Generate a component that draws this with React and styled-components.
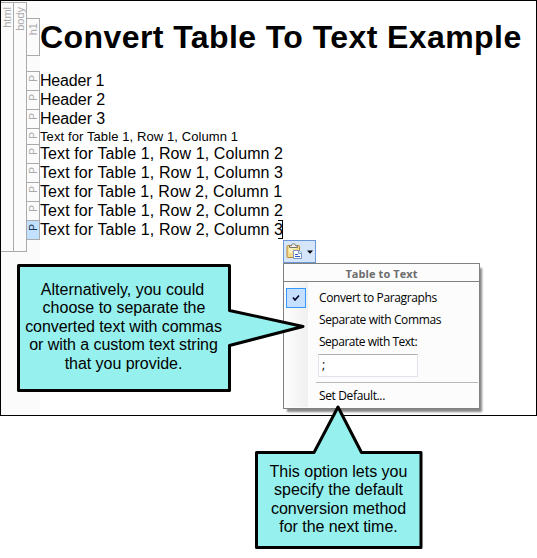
import React from "react";
import styled, { createGlobalStyle } from "styled-components";

const GlobalStyle = createGlobalStyle`
  * { box-sizing: border-box; }
  body { margin: 0; background: #fff; overflow: hidden; }
`;

const Stage = styled.main`
  position: relative;
  width: 537px;
  height: 558px;
  font-family: "Liberation Sans", Arial, sans-serif;
  color: #000;
`;

const Editor = styled.section`
  display: flex;
  width: 537px;
  height: 416px;
  border: 1px solid #000;
  background: linear-gradient(to right, #fbfbfb 39px, #fff 39px);
`;

const TagColumn = styled.div`
  width: 13px;
  height: 250px;
  margin-top: 1px;
  border: solid #aaa;
  border-width: 1px 1px 1px 0;
  display: flex;
  justify-content: center;
  padding-top: 4px;
`;

const TagName = styled.span`
  writing-mode: vertical-rl;
  transform: rotate(180deg);
  font-size: ${(p) => p.$size || 11}px;
  line-height: 11px;
  height: max-content;
  color: ${(p) => (p.$active ? "#1c3550" : "#aaa")};
`;

const Document = styled.div`
  display: flex;
  flex-direction: column;
  padding-top: 17px;
`;

const Block = styled.div`
  display: flex;
  height: ${(p) => p.$height}px;
  margin-bottom: ${(p) => p.$gap || 0}px;
`;

const BlockTag = styled.div`
  width: 14px;
  height: ${(p) => p.$height + 1}px;
  margin-left: -1px;
  border: 1px solid #aaa;
  background: ${(p) => (p.$active ? "#c2e0ff" : "#fbfbfb")};
  display: flex;
  justify-content: center;
  padding-top: ${(p) => p.$pad}px;
`;

const Heading = styled.h1`
  margin: 0;
  font-size: 32px;
  line-height: 38px;
  letter-spacing: 0.42px;
  white-space: nowrap;
`;

const Paragraph = styled.p`
  margin: 0;
  font-size: ${(p) => (p.$small ? 13 : 16)}px;
  line-height: ${(p) => (p.$small ? 17 : 19)}px;
  letter-spacing: ${(p) => p.$track || 0}px;
  white-space: nowrap;
`;

const Caret = styled.i`
  position: absolute;
  left: 278px;
  top: 220px;
  width: 5px;
  height: 19px;
  border: solid #000;
  border-width: 1px 1px 1px 0;
`;

const PasteOptions = styled.div`
  position: absolute;
  left: 283px;
  top: 240px;
`;

const PasteButton = styled.button`
  display: flex;
  align-items: center;
  width: 33px;
  height: 23px;
  padding: 0 0 0 2px;
  border: 1px solid #6c97d6;
  background: #d5e5fa;
`;

const Menu = styled.div`
  width: 197px;
  height: 146px;
  border: 1px solid #808080;
  background: #fcfcfc;
  box-shadow: 3px 4px 2px -1px #888;
  font-family: "Open Sans", "Noto Sans", sans-serif;
  font-size: 12px;
`;

const MenuTitle = styled.div`
  height: 18px;
  border-bottom: 1px solid #808080;
  color: #6d6d6d;
  font-size: 11px;
  font-weight: 700;
  line-height: 20px;
  letter-spacing: 0.08px;
  text-align: center;
`;

const MenuBody = styled.div`
  display: flex;
  height: 126px;
  padding-left: 2px;
`;

const CheckGutter = styled.div`
  width: 22px;
  height: 125px;
  padding-top: 4px;
  background: linear-gradient(to right, #fcfcfc, #f0f0f0);
`;

const CheckBox = styled.div`
  display: flex;
  align-items: center;
  justify-content: center;
  width: 20px;
  height: 20px;
  margin-top: 2px;
  border: 1px solid #3399ff;
  background: #c5dfff;
`;

const Options = styled.div`
  display: flex;
  flex-direction: column;
  flex: 1;
  padding: 5px 1px 0 8px;
`;

const Option = styled.div`
  height: 22px;
  padding-left: 3px;
  line-height: 22px;
  letter-spacing: ${(p) => p.$track || 0}px;
  white-space: nowrap;
`;

const SeparatorInput = styled.div`
  width: 100px;
  height: 23px;
  margin: 1px 0 5px 2px;
  padding-left: 3px;
  border: 1px solid #e2e3ea;
  border-top-color: #abadb3;
  border-radius: 1px;
  background: #fff;
  line-height: 19px;
`;

const Rule = styled.div`
  height: 1px;
  margin-bottom: 2px;
  background: #b9b9b9;
`;

const Callout = styled.aside`
  position: absolute;
  left: ${(p) => p.$x}px;
  top: ${(p) => p.$y}px;
  width: ${(p) => p.$w}px;
  height: ${(p) => p.$h}px;
`;

const CalloutShape = styled.svg`
  position: absolute;
  inset: 0;
  overflow: visible;
`;

const CalloutText = styled.div`
  position: relative;
  display: flex;
  flex-direction: column;
  align-items: center;
  width: ${(p) => p.$w}px;
  padding-top: ${(p) => p.$top}px;
  font-size: 16px;
  line-height: 18.4px;
`;

const CalloutLine = styled.span`
  white-space: nowrap;
  letter-spacing: ${(p) => p.$track || 0}px;
  margin-left: ${(p) => p.$shift || 0}px;
`;

const paragraphs = [
  { text: "Header 1", track: -0.2 },
  { text: "Header 2", track: -0.1 },
  { text: "Header 3", track: -0.1 },
  { text: "Text for Table 1, Row 1, Column 1", small: true, track: 0.1 },
  { text: "Text for Table 1, Row 1, Column 2", track: 0.1 },
  { text: "Text for Table 1, Row 1, Column 3", track: 0.1 },
  { text: "Text for Table 1, Row 2, Column 1", track: 0.07 },
  { text: "Text for Table 1, Row 2, Column 2", track: 0.1 },
  { text: "Text for Table 1, Row 2, Column 3", track: 0.1, active: true },
];

function PasteIcon() {
  return (
    <svg width="17" height="17" viewBox="0 0 17 17">
      <rect x="1" y="2.5" width="12.5" height="12" rx="1" fill="#f2d98b" stroke="#b48a35" />
      <path d="M3 5h7M3 7h4M3 9h3" stroke="#fbf0bf" strokeWidth="2" />
      <path d="M3.5 4.5V3L5.5 2.5C5.5.2 9.5.2 9.5 2.5L11.5 3V4.5Z" fill="#eee" stroke="#77746a" />
      <path d="M7.5 7.5H13L15.5 10V15.5H7.5Z" fill="#fff" stroke="#7899ca" />
      <path d="M12.5 7.5V10.5H15.5" fill="#dceaff" stroke="#7899ca" />
      <path d="M9 11.5h3M9 13.5h5" stroke="#315fc5" />
    </svg>
  );
}

export default function App() {
  return (
    <Stage>
      <GlobalStyle />
      <Editor>
        <TagColumn><TagName>html</TagName></TagColumn>
        <TagColumn><TagName>body</TagName></TagColumn>
        <Document>
          <Block $height={37} $gap={16}>
            <BlockTag $height={37} $pad={4}><TagName>h1</TagName></BlockTag>
            <Heading>Convert Table To Text Example</Heading>
          </Block>
          {paragraphs.map(({ text, small, active, track }) => (
            <Block key={text} $height={small ? 16 : 19}>
              <BlockTag $height={small ? 16 : 19} $pad={3} $active={active}>
                <TagName $active={active} $size={10}>P</TagName>
              </BlockTag>
              <Paragraph $small={small} $track={track}>{text}</Paragraph>
            </Block>
          ))}
        </Document>
      </Editor>
      <Caret />
      <PasteOptions>
        <PasteButton aria-label="Paste options">
          <PasteIcon />
          <svg width="12" height="8" viewBox="0 0 12 8"><path d="M4 2.5h6L7 5.8Z" fill="#000" /></svg>
        </PasteButton>
        <Menu>
          <MenuTitle>Table to Text</MenuTitle>
          <MenuBody>
            <CheckGutter>
              <CheckBox>
                <svg width="8" height="8" viewBox="0 0 8 8"><path d="M1 3.5L3 6L7 1.5" fill="none" stroke="#00002a" strokeWidth="1.6" /></svg>
              </CheckBox>
            </CheckGutter>
            <Options>
              <Option $track={-0.38}>Convert to Paragraphs</Option>
              <Option $track={-0.37}>Separate with Commas</Option>
              <Option $track={-0.48}>Separate with Text:</Option>
              <SeparatorInput>;</SeparatorInput>
              <Rule />
              <Option $track={-0.36}>Set Default...</Option>
            </Options>
          </MenuBody>
        </Menu>
      </PasteOptions>
      <Callout $x={17} $y={264} $w={290} $h={128}>
        <CalloutShape width="290" height="128" viewBox="0 0 290 128">
          <path d="M1.5 1.5H212.5V46.5L286 62.5L212.5 81.5V126.5H1.5Z" fill="#96f0ed" stroke="#000" strokeWidth="3" strokeLinejoin="round" />
        </CalloutShape>
        <CalloutText $w={213} $top={17}>
          <CalloutLine $shift={-2}>Alternatively, you could</CalloutLine>
          <CalloutLine $shift={1}>choose to separate the</CalloutLine>
          <CalloutLine $track={-0.06}>converted text with commas</CalloutLine>
          <CalloutLine $track={-0.06}>or with a custom text string</CalloutLine>
          <CalloutLine $track={-0.04}>that you provide.</CalloutLine>
        </CalloutText>
      </Callout>
      <Callout $x={255} $y={404} $w={168} $h={145}>
        <CalloutShape width="168" height="145" viewBox="0 0 168 145">
          <path d="M1.5 48.5H59L83 3L106.5 48.5H166V143.5H1.5Z" fill="#96f0ed" stroke="#000" strokeWidth="3" strokeLinejoin="round" />
        </CalloutShape>
        <CalloutText $w={167} $top={59}>
          <CalloutLine>This option lets you</CalloutLine>
          <CalloutLine>specify the default</CalloutLine>
          <CalloutLine>conversion method</CalloutLine>
          <CalloutLine $track={-0.05}>for the next time.</CalloutLine>
        </CalloutText>
      </Callout>
    </Stage>
  );
}
